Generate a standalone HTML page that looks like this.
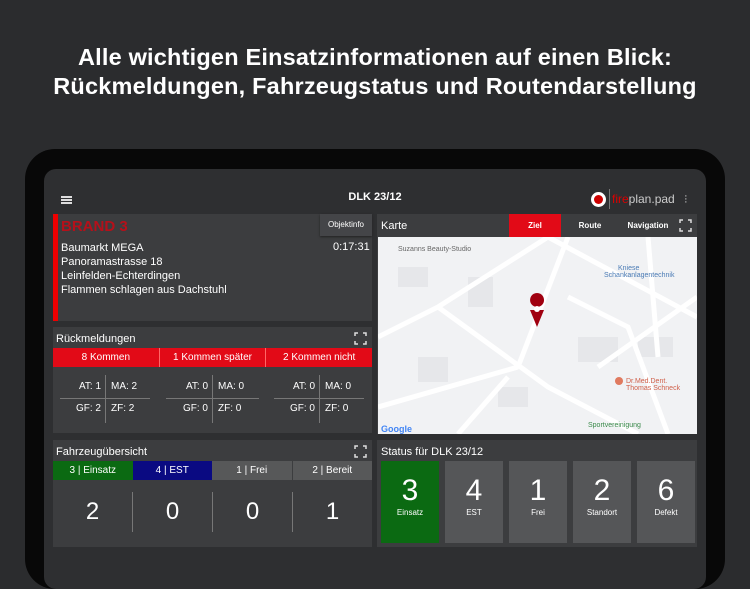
<!DOCTYPE html>
<html><head><meta charset="utf-8"><style>
*{margin:0;padding:0;box-sizing:border-box}
body{width:750px;height:562px;background:#2b2c2e;font-family:"Liberation Sans",sans-serif;color:#fff;position:relative;overflow:hidden}
.t{position:absolute;left:0;width:750px;text-align:center;font-size:23.5px;font-weight:bold;letter-spacing:0.2px;white-space:nowrap}
.dev{position:absolute;left:25px;top:149px;width:700px;height:440px;background:#080808;border-radius:30px}
.scr{position:absolute;left:44px;top:169px;width:662px;height:420px;background:#2e2f31;border-radius:12px}
.p{position:absolute;background:#3c3d3f}
.a{position:absolute}
.s{font-size:11px}
.fs{position:absolute;width:13px;height:13px}
.r{position:absolute;text-align:right;width:40px;font-size:10px}
.l{position:absolute;font-size:10px}
</style></head><body>
<div class="t" style="top:44px">Alle wichtigen Einsatzinformationen auf einen Blick:</div>
<div class="t" style="top:73px">Rückmeldungen, Fahrzeugstatus und Routendarstellung</div>
<div class="dev"></div>
<div class="scr"></div>
<!-- header -->
<div class="a" style="left:61px;top:196px;width:11px;height:2px;background:#ddd;box-shadow:0 3px 0 #ddd,0 6px 0 #ddd"></div>
<div class="a" style="left:340px;top:191px;width:70px;text-align:center;font-size:11px;font-weight:bold">DLK 23/12</div>
<div class="a" style="left:591px;top:192px;width:15px;height:15px;border-radius:50%;background:#fff"><div style="margin:3px;width:9px;height:9px;border-radius:50%;background:#c00"></div></div>
<div class="a" style="left:609px;top:189px;width:1px;height:20px;background:#777"></div>
<div class="a" style="left:612px;top:192px;font-size:12px;color:#ccc"><span style="color:#d00">fire</span>plan.pad</div>
<div class="a" style="left:684px;top:195px;font-size:11px;color:#ccc;line-height:3px">·<br>·<br>·</div>
<!-- panel 1 -->
<div class="p" style="left:53px;top:214px;width:319px;height:107px"></div>
<div class="a" style="left:53px;top:214px;width:5px;height:107px;background:#e00"></div>
<div class="a" style="left:61px;top:218px;font-size:15px;font-weight:bold;color:#b5101a">BRAND 3</div>
<div class="a" style="left:320px;top:214px;width:52px;height:22px;background:#444548;font-size:8px;text-align:center;line-height:22px;box-shadow:0 1px 2px #222">Objektinfo</div>
<div class="a s" style="left:61px;top:241px;line-height:14px">Baumarkt MEGA<br>Panoramastrasse 18<br>Leinfelden-Echterdingen<br>Flammen schlagen aus Dachstuhl</div>
<div class="a s" style="left:333px;top:241px">0:17:31</div>
<!-- Rückmeldungen -->
<div class="p" style="left:53px;top:327px;width:319px;height:106px"></div>
<div class="a s" style="left:56px;top:333px">Rückmeldungen</div>
<svg class="fs" style="left:354px;top:332px" viewBox="0 0 13 13" fill="none" stroke="#ddd" stroke-width="1.5"><path d="M1 4V1h3M9 1h3v3M12 9v3H9M4 12H1V9"/></svg>
<div class="a" style="left:53px;top:348px;width:319px;height:19px;background:#e20a17;display:flex;font-size:10px">
<div style="flex:1;text-align:center;line-height:19px;border-right:1px solid #f66">8 Kommen</div>
<div style="flex:1;text-align:center;line-height:19px;border-right:1px solid #f66">1 Kommen später</div>
<div style="flex:1;text-align:center;line-height:19px">2 Kommen nicht</div></div>
<div class="a" style="left:60px;top:398px;width:90px;height:1px;background:#777"></div>
<div class="a" style="left:105px;top:375px;width:1px;height:48px;background:#777"></div>
<div class="a" style="left:166px;top:398px;width:93px;height:1px;background:#777"></div>
<div class="a" style="left:212px;top:375px;width:1px;height:48px;background:#777"></div>
<div class="a" style="left:274px;top:398px;width:90px;height:1px;background:#777"></div>
<div class="a" style="left:319px;top:375px;width:1px;height:48px;background:#777"></div>
<div class="r" style="left:61px;top:381px">AT: 1</div><div class="l" style="left:111px;top:381px">MA: 2</div>
<div class="r" style="left:61px;top:403px">GF: 2</div><div class="l" style="left:111px;top:403px">ZF: 2</div>
<div class="r" style="left:168px;top:381px">AT: 0</div><div class="l" style="left:218px;top:381px">MA: 0</div>
<div class="r" style="left:168px;top:403px">GF: 0</div><div class="l" style="left:218px;top:403px">ZF: 0</div>
<div class="r" style="left:275px;top:381px">AT: 0</div><div class="l" style="left:325px;top:381px">MA: 0</div>
<div class="r" style="left:275px;top:403px">GF: 0</div><div class="l" style="left:325px;top:403px">ZF: 0</div>
<!-- Fahrzeug -->
<div class="p" style="left:53px;top:440px;width:319px;height:107px"></div>
<div class="a s" style="left:56px;top:446px">Fahrzeugübersicht</div>
<svg class="fs" style="left:354px;top:445px" viewBox="0 0 13 13" fill="none" stroke="#ddd" stroke-width="1.5"><path d="M1 4V1h3M9 1h3v3M12 9v3H9M4 12H1V9"/></svg>
<div class="a" style="left:53px;top:461px;width:319px;height:19px;display:flex;font-size:10px;line-height:19px;text-align:center">
<div style="flex:1;background:#0b6a12">3 | Einsatz</div><div style="flex:1;background:#0a0a82">4 | EST</div>
<div style="flex:1;background:#575859;border-right:1px solid #3c3d3f">1 | Frei</div><div style="flex:1;background:#575859">2 | Bereit</div></div>
<div class="a" style="left:53px;top:492px;width:319px;display:flex;font-size:24px;text-align:center">
<div style="flex:1;line-height:40px">2</div><div style="flex:1;line-height:40px;border-left:1px solid #777">0</div><div style="flex:1;line-height:40px;border-left:1px solid #777">0</div><div style="flex:1;line-height:40px;border-left:1px solid #777">1</div></div>
<!-- Karte -->
<div class="p" style="left:377px;top:214px;width:320px;height:220px"></div>
<div class="a s" style="left:381px;top:220px">Karte</div>
<div class="a" style="left:509px;top:214px;width:52px;height:23px;background:#e20a17;font-size:8px;font-weight:bold;text-align:center;line-height:23px">Ziel</div>
<div class="a" style="left:570px;top:214px;width:40px;font-size:8px;font-weight:bold;text-align:center;line-height:23px">Route</div>
<div class="a" style="left:622px;top:214px;width:52px;font-size:8px;font-weight:bold;text-align:center;line-height:23px">Navigation</div>
<svg class="fs" style="left:679px;top:219px" viewBox="0 0 13 13" fill="none" stroke="#ddd" stroke-width="1.5"><path d="M1 4V1h3M9 1h3v3M12 9v3H9M4 12H1V9"/></svg>
<svg class="a" style="left:378px;top:237px" width="319" height="197" viewBox="0 0 319 197">
<rect width="319" height="197" fill="#f1f2f4"/>
<g fill="#e6e7ea">
<rect x="20" y="30" width="30" height="20"/><rect x="90" y="40" width="25" height="30"/><rect x="200" y="100" width="40" height="25"/><rect x="120" y="150" width="30" height="20"/><rect x="260" y="100" width="35" height="20"/><rect x="40" y="120" width="30" height="25"/>
</g>
<g stroke="#fff" stroke-width="5" fill="none">
<path d="M0 100 L60 70 L170 0"/><path d="M60 70 L170 150 L260 197"/><path d="M190 0 L140 130"/><path d="M170 0 L319 80"/><path d="M190 60 L250 90 L290 197"/><path d="M0 170 L140 130"/><path d="M220 130 L319 60"/><path d="M270 0 L280 120"/><path d="M80 197 L130 140"/>
</g>
<text x="20" y="14" font-size="7" fill="#666" font-family="Liberation Sans">Suzanns Beauty-Studio</text>
<text x="240" y="33" font-size="7" fill="#4a7bb5" font-family="Liberation Sans">Kniese</text>
<text x="226" y="40" font-size="7" fill="#4a7bb5" font-family="Liberation Sans">Schankanlagentechnik</text>
<text x="248" y="146" font-size="7" fill="#d0604a" font-family="Liberation Sans">Dr.Med.Dent.</text>
<text x="248" y="153" font-size="7" fill="#d0604a" font-family="Liberation Sans">Thomas Schneck</text>
<text x="210" y="190" font-size="7" fill="#3a8a4a" font-family="Liberation Sans">Sportvereinigung</text>
<text x="3" y="195" font-size="9" fill="#4285f4" font-family="Liberation Sans" font-weight="bold">Google</text>
<circle cx="241" cy="144" r="4" fill="#e07a5f"/>
<path d="M159 70 a7 7 0 1 1 0.1 0 Z M152 73 L159 90 L166 73 Z" fill="#a00010"/>
<circle cx="159" cy="72" r="3" fill="#fff"/>
</svg>
<!-- Status -->
<div class="p" style="left:377px;top:440px;width:320px;height:107px"></div>
<div class="a s" style="left:381px;top:446px">Status für DLK 23/12</div>
<div class="a" style="left:381px;top:461px;width:58px;height:82px;background:#0b6a12"></div>
<div class="a" style="left:445px;top:461px;width:58px;height:82px;background:#555658"></div>
<div class="a" style="left:509px;top:461px;width:58px;height:82px;background:#555658"></div>
<div class="a" style="left:573px;top:461px;width:58px;height:82px;background:#555658"></div>
<div class="a" style="left:637px;top:461px;width:58px;height:82px;background:#555658"></div>
<div class="a" style="left:381px;top:474px;width:316px;display:flex;gap:6px;text-align:center">
<div style="width:58px"><div style="font-size:30px;line-height:34px">3</div><div style="font-size:8px">Einsatz</div></div>
<div style="width:58px"><div style="font-size:30px;line-height:34px">4</div><div style="font-size:8px">EST</div></div>
<div style="width:58px"><div style="font-size:30px;line-height:34px">1</div><div style="font-size:8px">Frei</div></div>
<div style="width:58px"><div style="font-size:30px;line-height:34px">2</div><div style="font-size:8px">Standort</div></div>
<div style="width:58px"><div style="font-size:30px;line-height:34px">6</div><div style="font-size:8px">Defekt</div></div>
</div>
</body></html>
